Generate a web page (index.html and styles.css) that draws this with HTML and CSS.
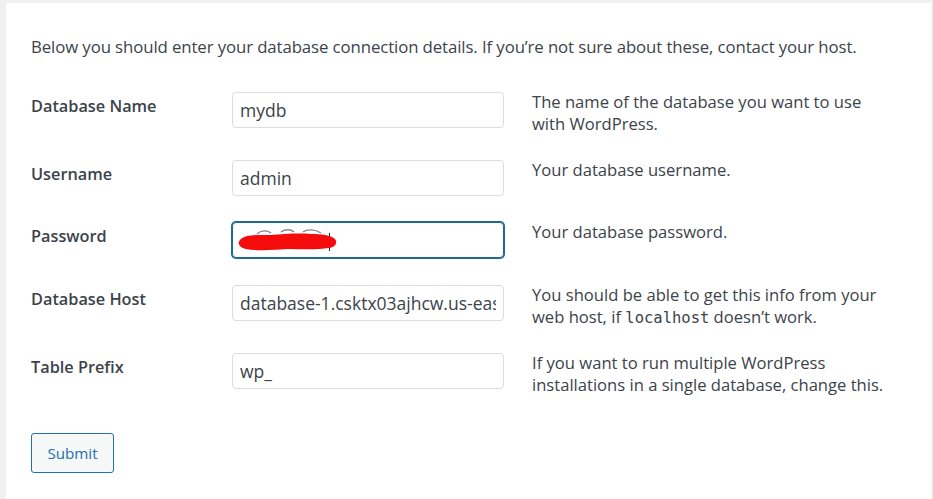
FILE: index.html
```html
<!DOCTYPE html>
<html lang="en">
<head>
<meta charset="utf-8">
<title>Database connection</title>
<link rel="stylesheet" href="styles.css">
</head>
<body>
<div class="panel">
  <p class="intro">Below you should enter your database connection details. If you’re not sure about these, contact your host.</p>
  <form class="form-table">
    <div class="row r1">
      <label class="label">Database Name</label>
      <div class="field"><input class="input" type="text" value="mydb"></div>
      <div class="desc">The name of the database you want to use<br>with WordPress.</div>
    </div>
    <div class="row r2">
      <label class="label">Username</label>
      <div class="field"><input class="input" type="text" value="admin"></div>
      <div class="desc">Your database username.</div>
    </div>
    <div class="row r3">
      <label class="label">Password</label>
      <div class="field">
        <div class="input focused"><span class="caret"></span></div>
        <svg class="scribble" width="104" height="26" viewBox="0 0 104 26" aria-hidden="true">
          <path d="M20 7 C24 3 30 3 34 6 M44 5 C48 2 54 2 57 5 M66 5 C70 2 78 2 84 6" stroke="#5e4f4f" stroke-width="1.3" fill="none" opacity="0.7"/>
          <path d="M3 13 C8 7 22 8 34 8 C46 7 62 6 74 7 C84 7 94 8 98 12 C101 16 98 20 92 21 C80 23 64 22 50 22 C36 23 20 24 9 22 C2 20 0 16 3 13 Z" fill="#f50b0b"/>
        </svg>
      </div>
      <div class="desc">Your database password.</div>
    </div>
    <div class="row r4">
      <label class="label">Database Host</label>
      <div class="field"><input class="input" type="text" value="database-1.csktx03ajhcw.us-east-1.rds.amazonaws.com"></div>
      <div class="desc">You should be able to get this info from your<br>web host, if <code>localhost</code> doesn’t work.</div>
    </div>
    <div class="row r5">
      <label class="label">Table Prefix</label>
      <div class="field"><input class="input" type="text" value="wp_"></div>
      <div class="desc">If you want to run multiple WordPress<br>installations in a single database, change this.</div>
    </div>
    <div class="actions">
      <button class="button" type="button">Submit</button>
    </div>
  </form>
</div>
</body>
</html>
```

FILE: styles.css
```css
html, body {
  margin: 0;
  height: 100%;
}
body {
  background: #f1f1f1;
  padding: 3px 2px 0 6px;
  box-sizing: border-box;
  overflow: hidden;
  font-family: "Open Sans", "Noto Sans", sans-serif;
  color: #3c434a;
}
.panel {
  background: #fff;
  height: 100%;
  padding: 33px 0 0 25px;
  box-sizing: border-box;
}
.intro {
  margin: 0 0 34px;
  font-size: 16.8px;
  line-height: 22px;
  letter-spacing: -0.1px;
  white-space: nowrap;
}
.form-table {
  margin: 0;
}
.row {
  display: grid;
  grid-template-columns: 201px 272px 1fr;
  align-items: start;
}
.r1 { height: 68px; }
.r2 { height: 62px; }
.r3 { height: 63px; }
.r4 { height: 68px; }
.r5 { height: 80px; }
.label {
  font-weight: 600;
  font-size: 16.3px;
  line-height: 22px;
  padding-top: 3px;
}
.field {
  position: relative;
}
.input {
  display: block;
  box-sizing: border-box;
  width: 272px;
  height: 36px;
  margin: 0;
  padding: 0 7px;
  border: 1px solid #dcdcde;
  border-radius: 4px;
  background: #fff;
  font-family: "Open Sans", "Noto Sans", sans-serif;
  font-size: 17.5px;
  color: #3c434a;
  outline: none;
}
.focused {
  border-color: #1f6a92;
  box-shadow: 0 0 0 1px #1f6a92;
  position: relative;
}
.caret {
  position: absolute;
  left: 96px;
  top: 10px;
  width: 1px;
  height: 18px;
  background: #222;
}
.scribble {
  position: absolute;
  left: 5px;
  top: 5px;
}
.desc {
  padding-left: 28px;
  font-size: 16.6px;
  line-height: 22px;
  margin-top: -1px;
  white-space: nowrap;
}
.desc code {
  font-family: "DejaVu Sans Mono", "Liberation Mono", monospace;
  font-size: 15.5px;
}
.actions {
  display: flex;
}
.button {
  box-sizing: border-box;
  width: 83px;
  height: 40px;
  padding: 0;
  border: 1px solid #2271b1;
  border-radius: 3px;
  background: #f6f7f7;
  color: #2271b1;
  font-family: "Open Sans", "Noto Sans", sans-serif;
  font-size: 15.2px;
}
```
